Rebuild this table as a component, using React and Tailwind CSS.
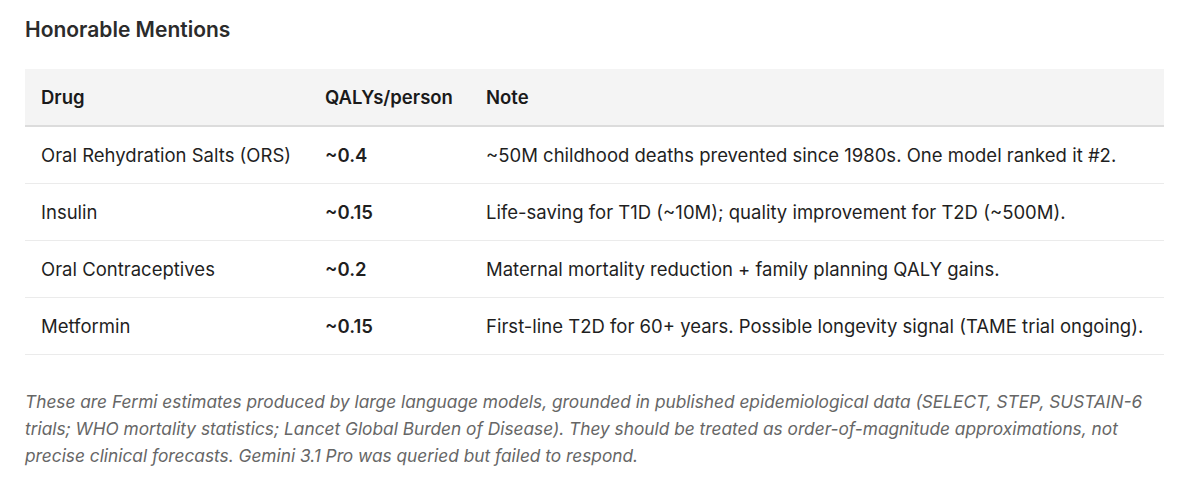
const rows = [
  {
    drug: 'Oral Rehydration Salts (ORS)',
    qaly: '~0.4',
    note: '~50M childhood deaths prevented since 1980s. One model ranked it #2.',
  },
  {
    drug: 'Insulin',
    qaly: '~0.15',
    note: 'Life-saving for T1D (~10M); quality improvement for T2D (~500M).',
  },
  {
    drug: 'Oral Contraceptives',
    qaly: '~0.2',
    note: 'Maternal mortality reduction + family planning QALY gains.',
  },
  {
    drug: 'Metformin',
    qaly: '~0.15',
    note: 'First-line T2D for 60+ years. Possible longevity signal (TAME trial ongoing).',
  },
]

export default function App() {
  return (
    <div className="min-h-[485px] bg-white px-[25px] pt-4 font-['Inter','Liberation_Sans',sans-serif] text-[#1f1f1f]">
      <h2 className="text-[21px] font-semibold leading-7 text-[#2b2b2b]">Honorable Mentions</h2>

      <table className="mt-[25px] w-[1139px] table-fixed border-collapse text-[18.5px] leading-6">
        <colgroup>
          <col className="w-[284px]" />
          <col className="w-[161px]" />
          <col />
        </colgroup>
        <thead>
          <tr className="border-b-2 border-[#dcdcdc] bg-[#f4f4f4] text-left">
            <th className="px-4 py-4 font-semibold text-[#1a1a1a]">Drug</th>
            <th className="px-4 py-4 font-semibold text-[#1a1a1a]">QALYs/person</th>
            <th className="px-4 py-4 font-semibold text-[#1a1a1a]">Note</th>
          </tr>
        </thead>
        <tbody>
          {rows.map((r) => (
            <tr key={r.drug} className="border-b border-[#ebebeb]">
              <td className="px-4 py-4 whitespace-nowrap">{r.drug}</td>
              <td className="px-4 py-4 font-semibold">{r.qaly}</td>
              <td className="px-4 py-4 whitespace-nowrap">{r.note}</td>
            </tr>
          ))}
        </tbody>
      </table>

      <p className="mt-[33px] w-[1139px] text-[17.3px] italic leading-[27px] text-[#666666]">
        These are Fermi estimates produced by large language models, grounded in published epidemiological data
        (SELECT, STEP, SUSTAIN-6 trials; WHO mortality statistics; Lancet Global Burden of Disease). They should be
        treated as order-of-magnitude approximations, not precise clinical forecasts. Gemini 3.1 Pro was queried but
        failed to respond.
      </p>
    </div>
  )
}
